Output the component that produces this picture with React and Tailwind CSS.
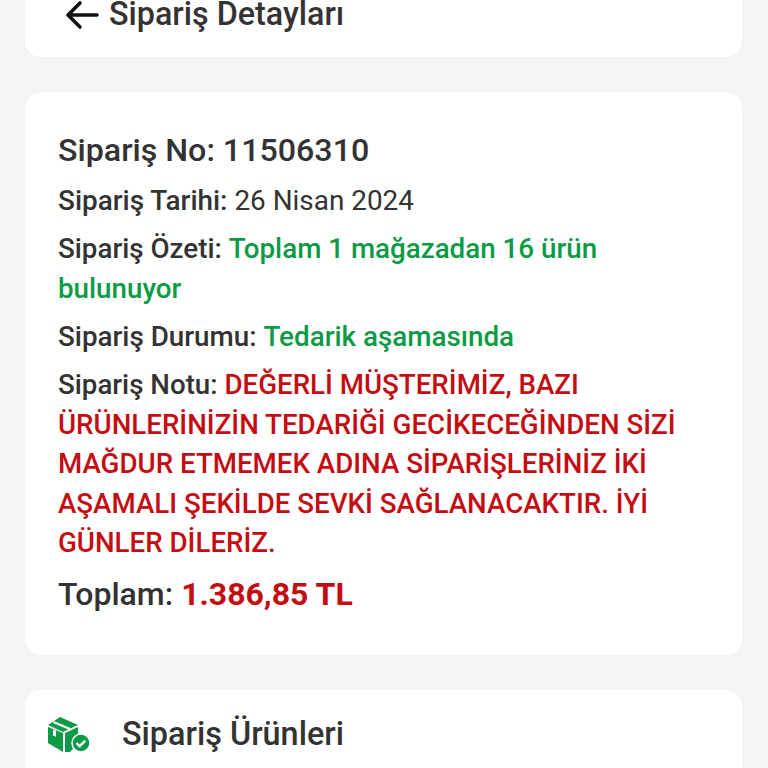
export default function App() {
  const font = { fontFamily: "Roboto, sans-serif" };
  return (
    <div style={font} className="h-[768px] w-[768px] overflow-hidden bg-[#f4f4f4] pl-[25px] pr-[26px] text-[#333333] font-['Roboto',sans-serif]">
      <div className="h-[57px] rounded-b-[16px] bg-white flex items-start pl-[40px] gap-[10px]">
        <svg width="34" height="30" viewBox="0 0 34 30" className="shrink-0" fill="none" stroke="#111" strokeWidth="3.6" strokeLinecap="round" strokeLinejoin="round">
          <path d="M32 15H4M15 3 3 15l12 12" />
        </svg>
        <div className="text-[32.3px] leading-[29px] font-medium whitespace-nowrap">Sipariş Detayları</div>
      </div>
      <div className="mt-[35px] h-[563px] rounded-[16px] bg-white px-[33px] pt-[38px]">
        <div className="text-[32.2px] leading-[40px] font-medium">Sipariş No: 11506310</div>
        <div className="mt-[11px] text-[27.9px] leading-[40px]"><span className="font-medium">Sipariş Tarihi:</span> 26 Nisan 2024</div>
        <div className="mt-[8px] text-[27.75px] leading-[40px]"><span className="font-medium">Sipariş Özeti:</span> <span className="text-[#0b9a45] font-medium">Toplam 1 mağazadan 16 ürün bulunuyor</span></div>
        <div className="mt-[8px] text-[27.8px] leading-[40px]"><span className="font-medium">Sipariş Durumu:</span> <span className="text-[#0b9a45] font-medium">Tedarik aşamasında</span></div>
        <div className="mt-[8px] text-[27.7px] leading-[39.5px]"><span className="font-medium">Sipariş Notu:</span> <span className="text-[#c40d12] font-medium">DEĞERLİ MÜŞTERİMİZ, BAZI ÜRÜNLERİNİZİN TEDARİĞİ GECİKECEĞİNDEN SİZİ MAĞDUR ETMEMEK ADINA SİPARİŞLERİNİZ İKİ AŞAMALI ŞEKİLDE SEVKİ SAĞLANACAKTIR. İYİ GÜNLER DİLERİZ.</span></div>
        <div className="mt-[11px] text-[32px] leading-[40px] font-medium">Toplam: <span className="text-[#c40d12] font-bold">1.386,85 TL</span></div>
      </div>
      <div className="mt-[35px] h-[200px] rounded-t-[16px] bg-white pl-[22px] pt-[24px] flex items-start gap-[31px]">
        <svg width="44" height="38" viewBox="0 0 44 38" className="shrink-0 mt-[2px]">
          <path d="M1 9 13 1l18 8-15 7z" fill="#0b9a45" />
          <path d="M6.5 6 23 13" stroke="#fff" strokeWidth="2.4" fill="none" />
          <path d="M1 11l15 6v19L1 27z" fill="#0b9a45" />
          <path d="M6 13.5v6l3 1.2v-6z" fill="#fff" />
          <path d="M18 17l13-6v16l-8 9h-5z" fill="#0b9a45" />
          <circle cx="34" cy="27" r="9" fill="#0b9a45" stroke="#fff" strokeWidth="1.5" />
          <path d="M29.5 27l3.2 3.2 5.5-5.5" fill="none" stroke="#fff" strokeWidth="2.4" />
        </svg>
        <div className="text-[32.4px] leading-[40px] font-medium">Sipariş Ürünleri</div>
      </div>
    </div>
  );
}
